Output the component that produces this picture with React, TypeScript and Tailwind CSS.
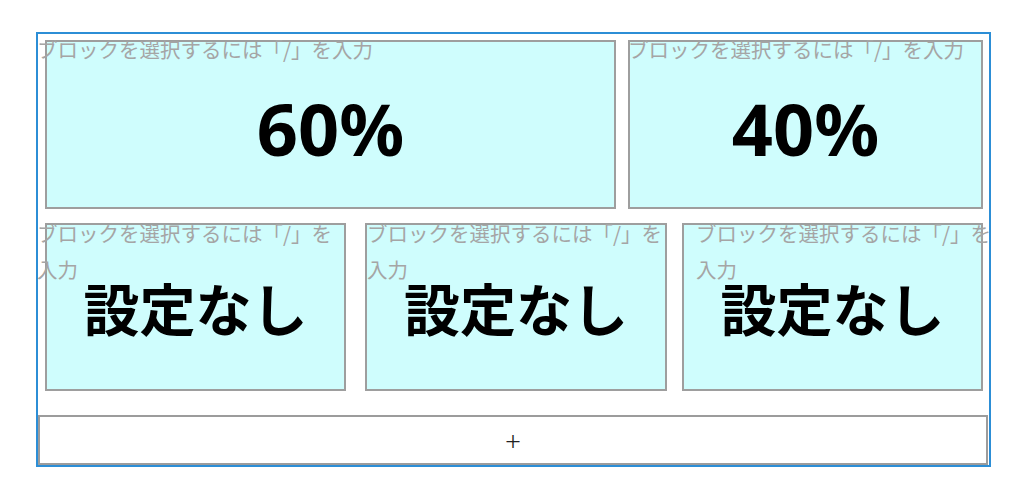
const font = { fontFamily: '"Noto Sans", "Noto Sans CJK JP", sans-serif' };
const jp = { fontFamily: '"Noto Sans CJK JP", "Noto Sans", sans-serif' };

type CellProps = {
  width: string;
  height: string;
  offset?: string;
  tip: string;
  children: React.ReactNode;
};

function Cell({ width, height, offset = "", tip, children }: CellProps) {
  return (
    <div className={`relative shrink-0 border-2 border-[#9e9e9e] bg-[#cffdfd] ${width} ${height} ${offset}`}>
      <p className={`absolute text-[20.5px] leading-[36px] text-[#a5a5a5] ${tip}`} style={jp}>
        ブロックを選択するには「/」を入力
      </p>
      <div className="flex h-full items-center justify-center">{children}</div>
    </div>
  );
}

export default function App() {
  return (
    <div className="h-[497px] w-[1024px] bg-white" style={font}>
      <div className="ml-[36px] pt-[32px]">
        <div className="flex h-[435px] w-[955px] flex-col border-2 border-[#2c8ed6]">
          <div className="mt-[6px] flex pl-[7px]">
            <Cell width="w-[571px]" height="h-[169px]" tip="-left-[10px] -top-[11px] w-[560px]">
              <span className="pt-[6px] text-[72px] font-bold leading-none text-black">60%</span>
            </Cell>
            <Cell width="w-[355px]" height="h-[169px]" offset="ml-[12px]" tip="-left-[2px] -top-[11px] w-[350px]">
              <span className="pt-[6px] text-[72px] font-bold leading-none text-black">40%</span>
            </Cell>
          </div>

          <div className="mt-[14px] flex pl-[7px]">
            <Cell width="w-[301px]" height="h-[168px]" tip="-left-[10px] -top-[10px] w-[301px]">
              <span className="text-[56px] font-bold leading-none text-black" style={jp}>
                設定なし
              </span>
            </Cell>
            <Cell width="w-[302px]" height="h-[168px]" offset="ml-[19px]" tip="left-0 -top-[10px] w-[301px]">
              <span className="text-[56px] font-bold leading-none text-black" style={jp}>
                設定なし
              </span>
            </Cell>
            <Cell width="w-[301px]" height="h-[168px]" offset="ml-[15px]" tip="left-[12px] -top-[10px] w-[301px]">
              <span className="text-[56px] font-bold leading-none text-black" style={jp}>
                設定なし
              </span>
            </Cell>
          </div>

          <button
            className="mt-[24px] flex h-[50px] w-[950px] items-center justify-center border-2 border-[#9c9c9c] bg-white text-[28px] font-light leading-none text-[#222]"
            type="button"
          >
            +
          </button>
        </div>
      </div>
    </div>
  );
}
